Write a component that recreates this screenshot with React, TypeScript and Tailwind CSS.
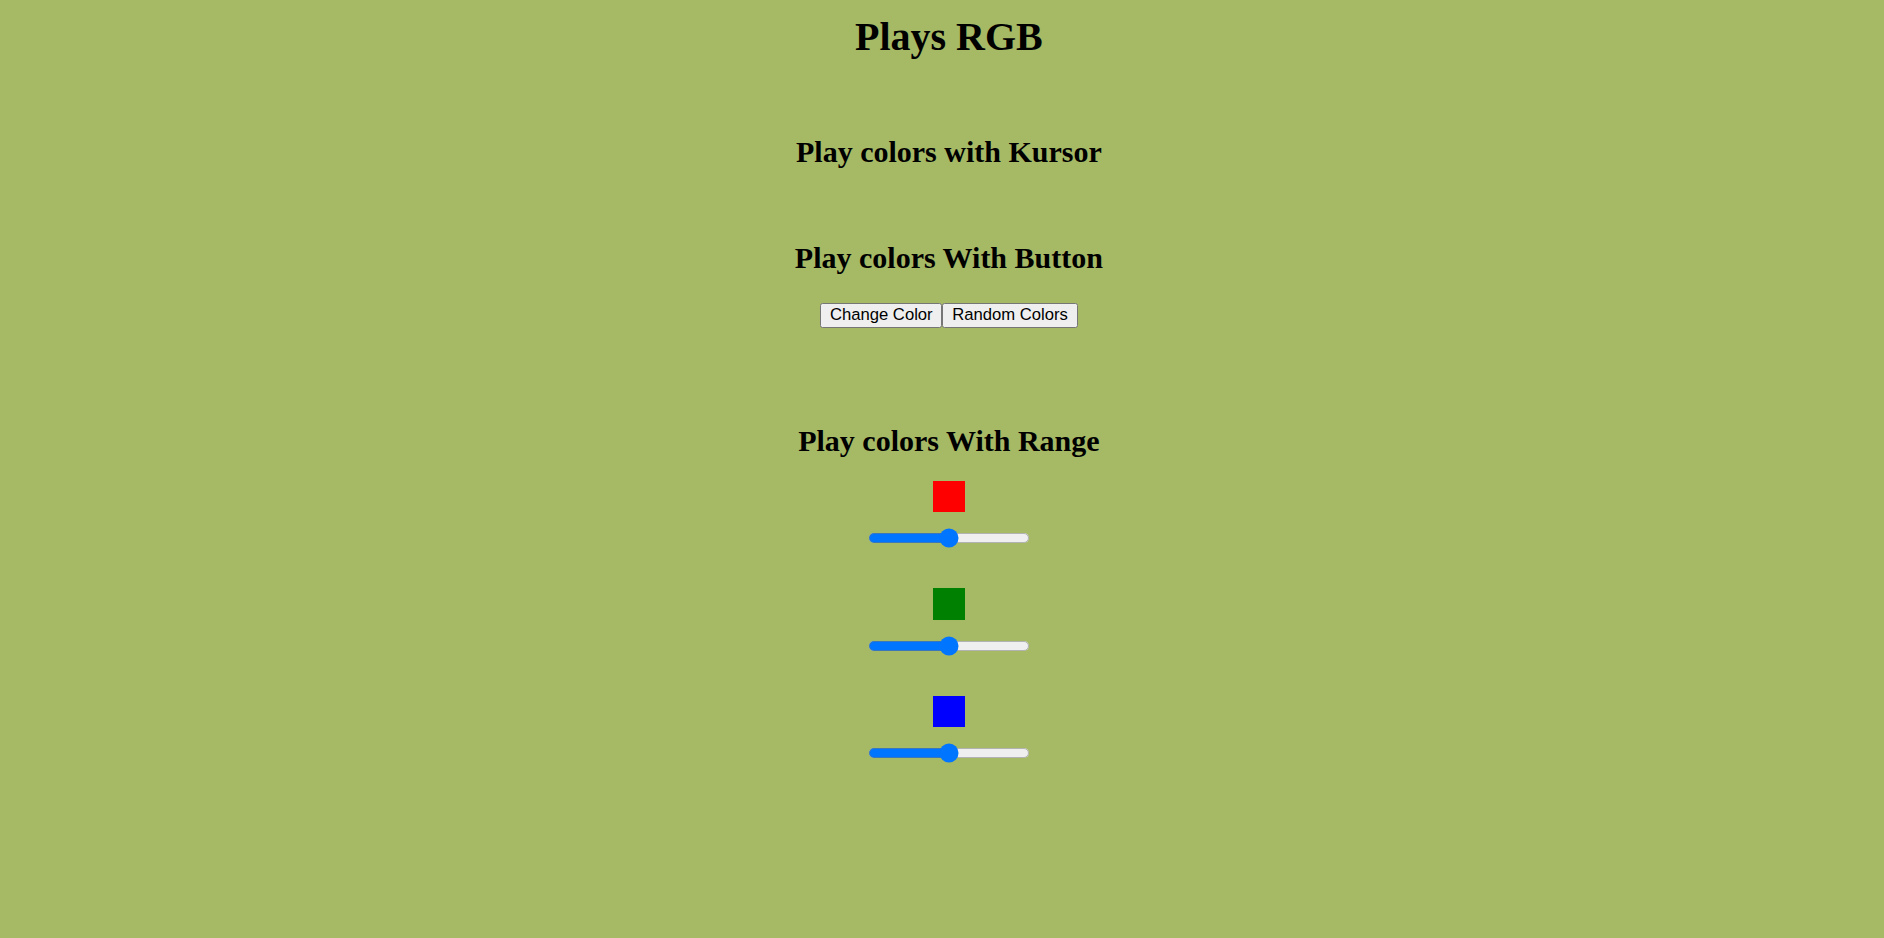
import React, { useState } from 'react';

const channels = [
  { id: 'r', color: 'bg-[#ff0000]' },
  { id: 'g', color: 'bg-[#008000]' },
  { id: 'b', color: 'bg-[#0000ff]' },
];

export default function App() {
  const [values, setValues] = useState<Record<string, number>>({ r: 50, g: 50, b: 50 });

  return (
    <div className="min-h-screen w-full bg-[#a6b965] text-black font-['Liberation_Serif','Times_New_Roman',serif]">
      <div className="[zoom:1.25] flex flex-col items-center pl-[11px]">
        <h1 className="mt-[11px] text-[32px] leading-[36px] font-bold">Plays RGB</h1>

        <h2 className="mt-[60px] text-[24px] leading-[28px] font-bold">Play colors with Kursor</h2>

        <h2 className="mt-[57px] text-[24px] leading-[28px] font-bold">Play colors With Button</h2>
        <div className="mt-[22px] flex font-['Liberation_Sans',Arial,sans-serif] text-[13.333px] leading-[15px]">
          <button className="bg-[#efefef] border border-[#767676] rounded-[2px] px-[7px] py-[2px]">Change Color</button>
          <button className="bg-[#efefef] border border-[#767676] rounded-[2px] px-[7px] py-[2px]">Random Colors</button>
        </div>

        <h2 className="mt-[76px] text-[24px] leading-[28px] font-bold">Play colors With Range</h2>
        <div className="mt-[18px] flex flex-col items-center">
          {channels.map((c, i) => (
            <div key={c.id} className={`flex flex-col items-center ${i > 0 ? 'mt-[32px]' : ''}`}>
              <div className={`w-[25px] h-[25px] ${c.color}`} />
              <input
                type="range"
                min={0}
                max={100}
                value={values[c.id]}
                onChange={(e) => setValues({ ...values, [c.id]: Number(e.target.value) })}
                className="mt-[13px] m-0 block w-[129px] h-[16px]"
              />
            </div>
          ))}
        </div>
      </div>
    </div>
  );
}
